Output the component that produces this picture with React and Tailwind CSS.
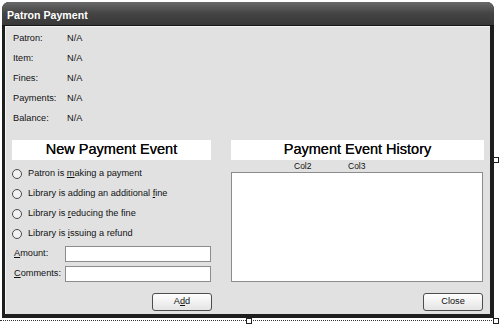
import React from 'react';

const info = ['Patron:', 'Item:', 'Fines:', 'Payments:', 'Balance:'];

const Radio = ({ children }) => (
  <div className="h-[20px] flex items-center">
    <span className="w-[10px] h-[10px] rounded-full border border-[#4a4a4a] bg-[#f2f2f2] mr-[6px]" />
    <span className="text-[9.2px] text-[#111]">{children}</span>
  </div>
);

const WinButton = ({ children }) => (
  <button className="w-[60px] h-[18px] rounded-[3px] border border-[#4d4d4d] bg-gradient-to-b from-white to-[#e4e4e4] text-[9.2px] text-[#111] leading-none">
    {children}
  </button>
);

const Handle = ({ className }) => (
  <span className={'absolute w-[6px] h-[6px] bg-white border border-[#222] ' + className} />
);

const App = () => {
  return (
    <div className="relative w-[500px] h-[326px] bg-white overflow-hidden font-['Liberation_Sans',Arial,sans-serif]">
      <div className="pt-[2px] pl-[2px]">
        <div className="w-[492px] h-[316px] rounded-t-[7px] bg-[#1e1e1e] flex flex-col">
          {/* title bar */}
          <div className="h-[24px] rounded-t-[7px] bg-gradient-to-b from-[#6a6a6a] via-[#444] to-[#383838] border-b border-[#151515] flex items-center pl-[5px] pt-[4px]">
            <span className="text-white font-bold text-[10.6px]">Patron Payment</span>
          </div>

          {/* content */}
          <div className="flex-1 ml-[3px] mr-[4px] mb-[4px] bg-[#e1e1e1] border-t border-l border-[#f4f4f4] pl-[6px] pt-[2px] flex flex-col">
            <div className="flex flex-col">
              {info.map((label) => (
                <div key={label} className="h-[20px] flex items-center pl-[1px] text-[9.2px] text-[#111]">
                  <span className="w-[54px]">{label}</span>
                  <span>N/A</span>
                </div>
              ))}
            </div>

            <div className="flex gap-[20px] mt-[11px]">
              {/* left column */}
              <div className="w-[199px] flex flex-col">
                <div className="h-[20px] bg-white flex items-center justify-center text-[14.5px] text-[#0a0a0a] [text-shadow:0_0_0.5px_#000]">
                  New Payment Event
                </div>
                <div className="mt-[4px] flex flex-col">
                  <Radio>Patron is <u>m</u>aking a payment</Radio>
                  <Radio>Library is adding an additional <u>f</u>ine</Radio>
                  <Radio>Library is <u>r</u>educing the fine</Radio>
                  <Radio>Library is <u>i</u>ssuing a refund</Radio>
                </div>
                <div className="mt-[2px] flex items-center">
                  <span className="w-[53px] pl-[2px] text-[9.2px] text-[#111]"><u>A</u>mount:</span>
                  <div className="w-[146px] h-[16px] bg-white border border-[#8c8c8c]" />
                </div>
                <div className="mt-[4px] flex items-center">
                  <span className="w-[53px] pl-[2px] text-[9.2px] text-[#111]"><u>C</u>omments:</span>
                  <div className="w-[146px] h-[16px] bg-white border border-[#8c8c8c]" />
                </div>
                <div className="mt-[11px] flex justify-end mr-[-1px]">
                  <WinButton>A<u>d</u>d</WinButton>
                </div>
              </div>

              {/* right column */}
              <div className="w-[253px] flex flex-col">
                <div className="h-[20px] bg-white flex items-center justify-center text-[14.5px] text-[#0a0a0a] [text-shadow:0_0_0.5px_#000]">
                  Payment Event History
                </div>
                <div className="h-[12px] relative text-[8.5px] text-[#111] leading-[12px]">
                  <span className="absolute left-[63px] top-0">Col2</span>
                  <span className="absolute left-[117px] top-0">Col3</span>
                </div>
                <div className="h-[110px] w-[252px] bg-white border border-[#8c8c8c]" />
                <div className="mt-[11px] flex justify-end pr-[1px]">
                  <WinButton>Close</WinButton>
                </div>
              </div>
            </div>
          </div>
        </div>
      </div>

      {/* designer selection outline */}
      <div className="absolute left-0 top-[320px] w-[494px] border-t border-dotted border-[#333]" />
      <Handle className="left-[246px] top-[318px]" />
      <Handle className="left-[493px] top-[318px]" />
      <Handle className="left-[493px] top-[157px]" />
    </div>
  );
};

export default App;
